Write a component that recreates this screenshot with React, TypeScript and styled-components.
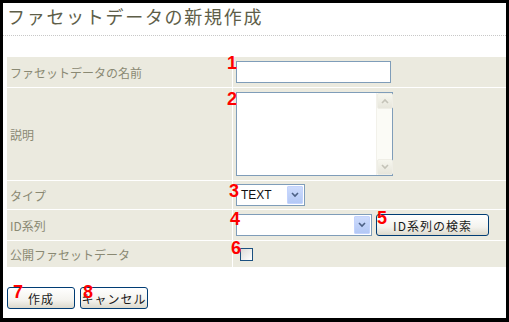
import React from "react";
import styled, { createGlobalStyle } from "styled-components";

const Global = createGlobalStyle`
  * { box-sizing: border-box; }
  body {
    margin: 0;
    background: #ffffff;
    font-family: "Noto Sans CJK JP", "Liberation Sans", sans-serif;
  }
`;

const Frame = styled.div`
  position: relative;
  width: 509px;
  height: 322px;
  border-style: solid;
  border-color: #000;
  border-width: 3px 3px 4px 3px;
  background: #fff;
  overflow: hidden;
`;

const Title = styled.h1`
  margin: 0;
  height: 33px;
  padding: 1px 0 0 4px;
  font-size: 18px;
  line-height: 24px;
  font-weight: normal;
  letter-spacing: 1.7px;
  color: #5e5e48;
  border-bottom: 1px dotted #c8c8c8;
`;

const Form = styled.table`
  margin: 21px 0 0 4px;
  width: 499px;
  table-layout: fixed;
  border-collapse: separate;
  border-spacing: 0;
  background: #ebeadf;
`;

const Row = styled.tr<{ $h: number; $last?: boolean }>`
  td {
    height: ${(p) => p.$h}px;
    border-bottom: ${(p) => (p.$last ? "none" : "1px solid #fff")};
    vertical-align: middle;
    padding: 0;
  }
`;

const Label = styled.td`
  width: 226px;
  border-right: 1px solid #fff;
  padding-left: 3px !important;
  font-size: 12px;
  color: #8a8973;
  white-space: nowrap;
`;

const Value = styled.td`
  position: relative;
`;

const Controls = styled.div<{ $indent?: number }>`
  display: flex;
  align-items: center;
  gap: 4px;
  padding-left: ${(p) => p.$indent ?? 3}px;
`;

const Num = styled.span<{ $x: number; $y: number }>`
  position: absolute;
  left: ${(p) => p.$x}px;
  top: ${(p) => p.$y}px;
  font-family: "Liberation Sans", Arial, sans-serif;
  font-weight: bold;
  font-size: 18px;
  line-height: 18px;
  letter-spacing: 0;
  color: #ff0000;
  z-index: 2;
  pointer-events: none;
`;

const TextInput = styled.input`
  width: 155px;
  height: 22px;
  border: 1px solid #7f9db9;
  background: #fff;
  padding: 0 2px;
  outline: none;
`;

const AreaBox = styled.div`
  display: flex;
  width: 157px;
  height: 84px;
  border: 1px solid #7f9db9;
  background: #fff;
`;

const Area = styled.textarea`
  flex: 1;
  border: none;
  resize: none;
  outline: none;
  background: transparent;
`;

const ScrollBar = styled.div`
  width: 16px;
  display: flex;
  flex-direction: column;
  justify-content: space-between;
  background: #fbfbf6;
  border-left: 1px solid #f2f1ea;
`;

const ScrollBtn = styled.div`
  width: 16px;
  height: 16px;
  display: flex;
  align-items: center;
  justify-content: center;
  background: linear-gradient(#f6f6ee, #e7e6dc);
  border: 1px solid #efeee6;
  border-radius: 2px;
`;

const SelectBox = styled.div<{ $w: number }>`
  position: relative;
  width: ${(p) => p.$w}px;
  height: 22px;
  border: 1px solid #7f9db9;
  background: #fff;
  display: flex;
  align-items: center;
  font-family: "Liberation Sans", Arial, sans-serif;
  font-size: 12px;
  color: #111;
  padding-left: 4px;
`;

const DropBtn = styled.span`
  position: absolute;
  right: 1px;
  top: 1px;
  width: 16px;
  height: 18px;
  display: flex;
  align-items: center;
  justify-content: center;
  background: linear-gradient(#cddbfc, #b3c8f5);
  border: 1px solid #c3d3fd;
  border-radius: 1px;
`;

const Button = styled.button<{ $w: number }>`
  position: relative;
  width: ${(p) => p.$w}px;
  height: 22px;
  padding: 0;
  border: 1px solid #003c74;
  border-radius: 3px;
  background: linear-gradient(#ffffff, #f4f3ee 60%, #dcd9cc);
  font-family: "Noto Sans CJK JP", sans-serif;
  font-size: 12px;
  letter-spacing: 1px;
  color: #1a1a1a;
  overflow: visible;
`;

const Check = styled.span`
  display: block;
  width: 13px;
  height: 13px;
  border: 1px solid #1c5180;
  background: linear-gradient(135deg, #dcdcd7, #ffffff);
`;

const Actions = styled.div`
  display: flex;
  gap: 5px;
  margin: 20px 0 0 4px;
`;

const Chevron = ({ up, color }: { up?: boolean; color: string }) => (
  <svg width="8" height="6" viewBox="0 0 8 6">
    <polyline
      points={up ? "1,5 4,2 7,5" : "1,1 4,4 7,1"}
      fill="none"
      stroke={color}
      strokeWidth="1.6"
    />
  </svg>
);

export default function App() {
  return (
    <>
      <Global />
      <Frame>
        <Title>ファセットデータの新規作成</Title>
        <Form>
          <tbody>
            <Row $h={31}>
              <Label>ファセットデータの名前</Label>
              <Value>
                <Num $x={-6} $y={-3}>1</Num>
                <Controls>
                  <TextInput />
                </Controls>
              </Value>
            </Row>
            <Row $h={93}>
              <Label>説明</Label>
              <Value>
                <Num $x={-6} $y={2}>2</Num>
                <Controls>
                  <AreaBox>
                    <Area />
                    <ScrollBar>
                      <ScrollBtn>
                        <Chevron up color="#c4c3b8" />
                      </ScrollBtn>
                      <ScrollBtn>
                        <Chevron color="#c4c3b8" />
                      </ScrollBtn>
                    </ScrollBar>
                  </AreaBox>
                </Controls>
              </Value>
            </Row>
            <Row $h={29}>
              <Label>タイプ</Label>
              <Value>
                <Num $x={-4} $y={1}>3</Num>
                <Controls>
                  <SelectBox $w={69}>
                    TEXT
                    <DropBtn>
                      <Chevron color="#4d6185" />
                    </DropBtn>
                  </SelectBox>
                </Controls>
              </Value>
            </Row>
            <Row $h={31}>
              <Label>ID系列</Label>
              <Value>
                <Num $x={-3} $y={0}>4</Num>
                <Num $x={144} $y={-1}>5</Num>
                <Controls>
                  <SelectBox $w={136}>
                    <DropBtn>
                      <Chevron color="#4d6185" />
                    </DropBtn>
                  </SelectBox>
                  <Button $w={113}>ID系列の検索</Button>
                </Controls>
              </Value>
            </Row>
            <Row $h={26} $last>
              <Label>公開ファセットデータ</Label>
              <Value>
                <Num $x={-2} $y={-2}>6</Num>
                <Controls $indent={7}>
                  <Check />
                </Controls>
              </Value>
            </Row>
          </tbody>
        </Form>
        <Actions>
          <Button $w={68}>
            <Num $x={5} $y={-5}>7</Num>
            作成
          </Button>
          <Button $w={68}>
            <Num $x={2} $y={-5}>8</Num>
            キャンセル
          </Button>
        </Actions>
      </Frame>
    </>
  );
}
